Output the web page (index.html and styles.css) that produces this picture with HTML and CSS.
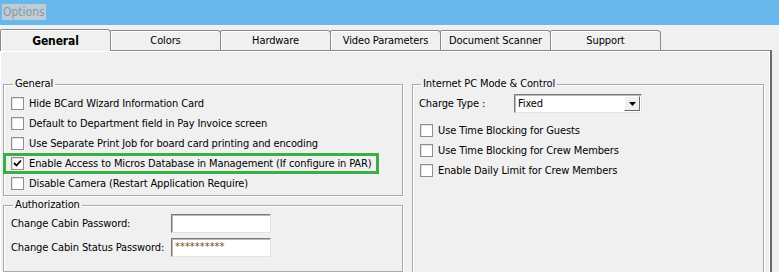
FILE: index.html
```html
<!DOCTYPE html>
<html lang="en">
<head>
<meta charset="UTF-8" />
<title>Options</title>
<link rel="stylesheet" href="styles.css">
</head>
<body>

<div class="titlebar"><span class="title">Options</span></div>

<div class="tabs">
  <div class="tab active">General</div>
  <div class="tab">Colors</div>
  <div class="tab">Hardware</div>
  <div class="tab">Video Parameters</div>
  <div class="tab">Document Scanner</div>
  <div class="tab">Support</div>
</div>

<div class="panel">
  <div class="col-left">
    <fieldset class="group general">
      <legend>General</legend>
      <div class="check"><span class="box"></span>Hide BCard Wizard Information Card</div>
      <div class="check"><span class="box"></span>Default to Department field in Pay Invoice screen</div>
      <div class="check"><span class="box"></span>Use Separate Print Job for board card printing and encoding</div>
      <div class="check marked"><span class="box"><svg width="11" height="11" viewBox="0 0 11 11"><polyline points="2,5 4.5,7.5 9,2.5" fill="none" stroke="#000" stroke-width="1.8"/></svg></span>Enable Access to Micros Database in Management (If configure in PAR)</div>
      <div class="check"><span class="box"></span>Disable Camera (Restart Application Require)</div>
    </fieldset>

    <fieldset class="group auth">
      <legend>Authorization</legend>
      <div class="field-grid">
        <span>Change Cabin Password:</span>
        <span class="input"></span>
        <span>Change Cabin Status Password:</span>
        <span class="input stars">**********</span>
      </div>
    </fieldset>
  </div>

  <div class="col-right">
    <fieldset class="group internet">
      <legend>Internet PC Mode &amp; Control</legend>
      <div class="charge">
        <span class="charge-label">Charge Type :</span>
        <span class="select">Fixed<span class="drop"><svg width="7" height="4" viewBox="0 0 7 4"><polygon points="0,0 7,0 3.5,4" fill="#000"/></svg></span></span>
      </div>
      <div class="check"><span class="box"></span>Use Time Blocking for Guests</div>
      <div class="check"><span class="box"></span>Use Time Blocking for Crew Members</div>
      <div class="check"><span class="box"></span>Enable Daily Limit for Crew Members</div>
    </fieldset>
  </div>
</div>

</body>
</html>
```

FILE: styles.css
```css
body {
  margin: 0;
  width: 779px;
  height: 272px;
  overflow: hidden;
  background: #f0f0f0;
  font-family: "DejaVu Sans Condensed", "Liberation Sans", sans-serif;
  font-size: 11px;
  letter-spacing: -0.12px;
  color: #000;
}
.titlebar {
  height: 25px;
  box-sizing: border-box;
  padding: 4px 2px 0;
  background: #68b8eb;
}
.title {
  display: inline-block;
  padding: 0 1px;
  line-height: 16px;
  font-size: 12px;
  letter-spacing: 0;
  color: #8a98a3;
  background: #bccdd8;
}
.tabs {
  display: flex;
  align-items: flex-end;
  height: 21px;
  padding-top: 4px;
}
.tab {
  width: 111px;
  height: 20px;
  margin-right: -1px;
  box-sizing: border-box;
  border: 1px solid #8a8a8a;
  border-bottom: none;
  border-radius: 2px 4px 0 0;
  box-shadow: inset 1px 1px 0 #fff;
  display: flex;
  align-items: center;
  justify-content: center;
  color: #000;
}
.tab.active {
  position: relative;
  z-index: 1;
  height: 22px;
  margin-bottom: -1px;
  font-weight: bold;
  font-size: 12px;
  background: #f0f0f0;
}
.panel {
  display: flex;
  gap: 9px;
  width: 772px;
  height: 222px;
  overflow: hidden;
  box-sizing: border-box;
  padding: 26px 0 0 3px;
  border-top: 1px solid #8a8a8a;
  border-right: 2px solid #6a6a6a;
  box-shadow: inset 1px 1px 0 #fff, inset -1px 0 0 #fff;
}
.col-left {
  width: 400px;
  display: flex;
  flex-direction: column;
  gap: 2px;
}
.col-right {
  width: 352px;
}
.group {
  margin: 0;
  min-width: 0;
  padding: 2px 7px 2px;
  border: 1px solid #a9a9a9;
  box-shadow: inset 1px 1px 0 #fff, 1px 1px 0 #fff;
}
.group legend {
  margin-left: 2px;
  padding: 0 2px;
  line-height: 14px;
}
.internet {
  height: 200px;
}
.internet legend {
  margin-left: 1px;
}
.auth {
  flex: 1;
  padding-top: 0;
}
.check {
  display: flex;
  align-items: center;
  gap: 5px;
  height: 20px;
  white-space: nowrap;
}
.box {
  width: 13px;
  height: 13px;
  box-sizing: border-box;
  border: 1px solid #8e8f8f;
  background: #fff;
  box-shadow: inset 1px 1px 0 #e2e2e2;
  display: flex;
  align-items: center;
  justify-content: center;
  flex-shrink: 0;
}
.marked {
  position: relative;
}
.marked::after {
  content: "";
  position: absolute;
  left: -8px;
  right: 16px;
  top: 0;
  bottom: -1px;
  border: 3px solid #3bae48;
}
.field-grid {
  display: grid;
  grid-template-columns: 160px 100px;
  grid-auto-rows: 19px;
  row-gap: 5px;
  align-items: center;
  padding-top: 2px;
}
.input {
  height: 19px;
  box-sizing: border-box;
  border: 1px solid #e3e3e3;
  border-top-color: #7a7a7a;
  border-left-color: #7a7a7a;
  box-shadow: inset 1px 1px 0 #b9b9b9;
  background: #fff;
  padding-left: 3px;
  line-height: 16px;
}
.stars {
  color: #7a4a1a;
  letter-spacing: 0;
}
.charge {
  display: flex;
  align-items: center;
  height: 21px;
  margin-bottom: 6px;
}
.charge-label {
  width: 95px;
  margin-left: -1px;
}
.select {
  width: 128px;
  height: 19px;
  box-sizing: border-box;
  border: 1px solid #e3e3e3;
  border-top-color: #7a7a7a;
  border-left-color: #7a7a7a;
  box-shadow: inset 1px 1px 0 #b9b9b9;
  background: #fff;
  padding-left: 3px;
  display: flex;
  align-items: center;
}
.drop {
  margin-left: auto;
  margin-right: 1px;
  width: 16px;
  height: 15px;
  box-sizing: border-box;
  background: #f0f0f0;
  border: 1px solid #6a6a6a;
  border-top-color: #fff;
  border-left-color: #fff;
  display: flex;
  align-items: center;
  justify-content: center;
}
```
